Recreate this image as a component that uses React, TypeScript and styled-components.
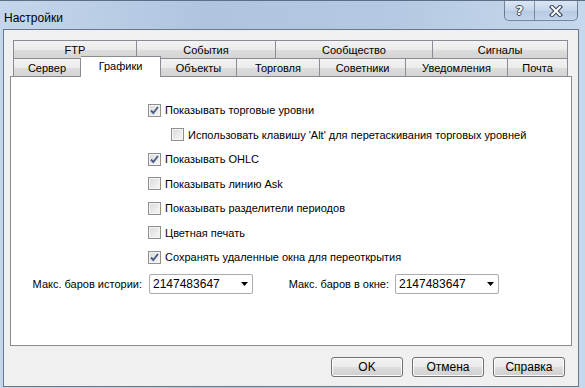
import React from 'react';
import styled, { createGlobalStyle } from 'styled-components';

const GlobalStyle = createGlobalStyle`
  html, body { margin: 0; padding: 0; }
  body {
    width: 585px;
    height: 388px;
    overflow: hidden;
    font-family: 'Liberation Sans', Arial, sans-serif;
    font-size: 11px;
    color: #000;
  }
`;

const Window = styled.div`
  width: 585px;
  height: 388px;
  box-sizing: border-box;
  display: flex;
  flex-direction: column;
  padding: 0 6px 1px 3px;
  border-top: 1px solid #5d6f86;
  background: linear-gradient(90deg, #c4d6eb 0%, #afc5df 35%, #b3c8e1 65%, #c6d8ec 100%);
`;

const TitleBar = styled.div`
  height: 28px;
  display: flex;
  justify-content: space-between;
  align-items: flex-start;
`;

const Title = styled.div`
  font-size: 12px;
  line-height: 12px;
  margin: 11px 0 0 1px;
  color: #000;
`;

const CaptionGroup = styled.div`
  display: flex;
  margin-right: 1px;
  border: 1px solid rgba(40, 55, 80, 0.55);
  border-top: none;
  border-radius: 0 0 5px 5px;
  overflow: hidden;
  background: linear-gradient(#dbe6f3, #c4d5ea 50%, #b6c9e1 51%, #c3d5ea);
`;

const CaptionButton = styled.div<{ $w: number; $last?: boolean }>`
  width: ${p => p.$w}px;
  height: 19px;
  display: flex;
  align-items: center;
  justify-content: center;
  border-right: ${p => (p.$last ? 'none' : '1px solid rgba(40, 55, 80, 0.45)')};
  box-sizing: border-box;
`;

const HelpGlyph = styled.span`
  font-family: 'DejaVu Sans', sans-serif;
  font-weight: bold;
  font-size: 13px;
  color: #fff;
  text-shadow: -1px 0 #3a4656, 1px 0 #3a4656, 0 -1px #3a4656, 0 1px #3a4656;
  line-height: 13px;
`;

const Client = styled.div`
  flex: 1;
  display: flex;
  flex-direction: column;
  background: #f0f0f0;
  border: 1px solid #6b7889;
  padding: 10px 6px 0 6px;
`;

const TabControl = styled.div`
  display: flex;
  flex-direction: column;
`;

const TabRow = styled.div`
  display: flex;
  align-items: flex-end;
  height: 18px;
  padding: 0 4px 0 3px;
`;

const Tab = styled.div<{ $w: number; $first?: boolean; $active?: boolean }>`
  width: ${p => p.$w}px;
  height: ${p => (p.$active ? 21 : 18)}px;
  box-sizing: border-box;
  display: flex;
  align-items: center;
  justify-content: center;
  border: 1px solid #898c95;
  border-left: ${p => (p.$first ? '1px solid #898c95' : 'none')};
  border-bottom: none;
  background: ${p => (p.$active ? '#fff' : 'linear-gradient(#f3f3f3, #ebebeb 50%, #dddddd 51%, #d4d4d4)')};
  padding-bottom: ${p => (p.$active ? 3 : 0)}px;
  margin-bottom: ${p => (p.$active ? -1 : 0)}px;
  position: relative;
  z-index: ${p => (p.$active ? 2 : 1)};
  white-space: nowrap;
`;

const Panel = styled.div`
  height: 270px;
  box-sizing: border-box;
  border: 1px solid #898c95;
  background: #fff;
  padding: 21px 0 0 0;
  display: flex;
  flex-direction: column;
`;

const CheckRow = styled.label<{ $indent?: number }>`
  height: 24.5px;
  display: flex;
  align-items: center;
  gap: 4px;
  padding-left: ${p => 137 + (p.$indent || 0)}px;
  white-space: nowrap;
`;

const Box = styled.span`
  width: 13px;
  height: 13px;
  box-sizing: border-box;
  border: 1px solid #8f8f8f;
  background: linear-gradient(135deg, #dadada, #f7f7f7);
  box-shadow: inset 0 0 0 1px #f4f4f4;
  display: flex;
  align-items: center;
  justify-content: center;
  flex: none;
`;

const ComboRow = styled.div`
  display: flex;
  align-items: center;
  margin-top: 4px;
`;

const Field = styled.div<{ $labelW: number }>`
  display: flex;
  align-items: center;
  span.lbl {
    width: ${p => p.$labelW}px;
    text-align: right;
    white-space: nowrap;
  }
`;

const Combo = styled.div<{ $gap: number }>`
  width: 104px;
  height: 20px;
  box-sizing: border-box;
  margin-left: ${p => p.$gap}px;
  border: 1px solid #abadb3;
  border-radius: 2px;
  background: #fff;
  display: flex;
  align-items: center;
  justify-content: space-between;
  padding: 0 4px 0 3px;
  font-size: 12px;
`;

const Footer = styled.div`
  display: flex;
  justify-content: flex-end;
  gap: 9px;
  padding: 11px 7px 0 0;
`;

const Button = styled.div`
  width: 72px;
  height: 20px;
  box-sizing: border-box;
  border: 1px solid #707070;
  border-radius: 3px;
  background: linear-gradient(#f2f2f2, #ebebeb 50%, #dddddd 51%, #cfcfcf);
  box-shadow: inset 0 0 0 1px #fcfcfc;
  display: flex;
  align-items: center;
  justify-content: center;
  font-size: 12px;
`;

const Check = () => (
  <svg width="9" height="9" viewBox="0 0 9 9">
    <path d="M1 4.5 L3.3 7 L8 1" fill="none" stroke="#4a5f86" strokeWidth="1.9" />
  </svg>
);

const CloseGlyph = () => (
  <svg width="14" height="12" viewBox="0 0 14 12">
    <path d="M3 2 L11 10 M11 2 L3 10" stroke="#3a4656" strokeWidth="4.2" strokeLinecap="square" />
    <path d="M3 2 L11 10 M11 2 L3 10" stroke="#fff" strokeWidth="2" strokeLinecap="square" />
  </svg>
);

const backTabs = [
  { t: 'FTP', w: 124 },
  { t: 'События', w: 139 },
  { t: 'Сообщество', w: 157 },
  { t: 'Сигналы', w: 135 },
];

const frontTabs = [
  { t: 'Сервер', w: 68 },
  { t: 'Графики', w: 80, active: true },
  { t: 'Объекты', w: 76 },
  { t: 'Торговля', w: 83 },
  { t: 'Советники', w: 86 },
  { t: 'Уведомления', w: 102 },
  { t: 'Почта', w: 60 },
];

const options = [
  { t: 'Показывать торговые уровни', on: true },
  { t: "Использовать клавишу 'Alt' для перетаскивания торговых уровней", on: false, indent: 23 },
  { t: 'Показывать OHLC', on: true },
  { t: 'Показывать линию Ask', on: false },
  { t: 'Показывать разделители периодов', on: false },
  { t: 'Цветная печать', on: false },
  { t: 'Сохранять удаленные окна для переоткрытия', on: true },
];

const Arrow = () => (
  <svg width="7" height="4" viewBox="0 0 7 4">
    <path d="M0 0 H7 L3.5 4 Z" fill="#000" />
  </svg>
);

export default function App() {
  return (
    <>
      <GlobalStyle />
      <Window>
        <TitleBar>
          <Title>Настройки</Title>
          <CaptionGroup>
            <CaptionButton $w={30}>
              <HelpGlyph>?</HelpGlyph>
            </CaptionButton>
            <CaptionButton $w={42} $last>
              <CloseGlyph />
            </CaptionButton>
          </CaptionGroup>
        </TitleBar>
        <Client>
          <TabControl>
            <TabRow>
              {backTabs.map((b, i) => (
                <Tab key={b.t} $w={b.w} $first={i === 0}>{b.t}</Tab>
              ))}
            </TabRow>
            <TabRow>
              {frontTabs.map((b, i) => (
                <Tab key={b.t} $w={b.w} $first={i === 0} $active={b.active}>{b.t}</Tab>
              ))}
            </TabRow>
            <Panel>
              {options.map(o => (
                <CheckRow key={o.t} $indent={o.indent}>
                  <Box>{o.on && <Check />}</Box>
                  {o.t}
                </CheckRow>
              ))}
              <ComboRow>
                <Field $labelW={131}>
                  <span className="lbl">Макс. баров истории:</span>
                  <Combo $gap={7}>2147483647<Arrow /></Combo>
                </Field>
                <Field $labelW={136}>
                  <span className="lbl">Макс. баров в окне:</span>
                  <Combo $gap={6}>2147483647<Arrow /></Combo>
                </Field>
              </ComboRow>
            </Panel>
          </TabControl>
          <Footer>
            <Button>OK</Button>
            <Button>Отмена</Button>
            <Button>Справка</Button>
          </Footer>
        </Client>
      </Window>
    </>
  );
}
